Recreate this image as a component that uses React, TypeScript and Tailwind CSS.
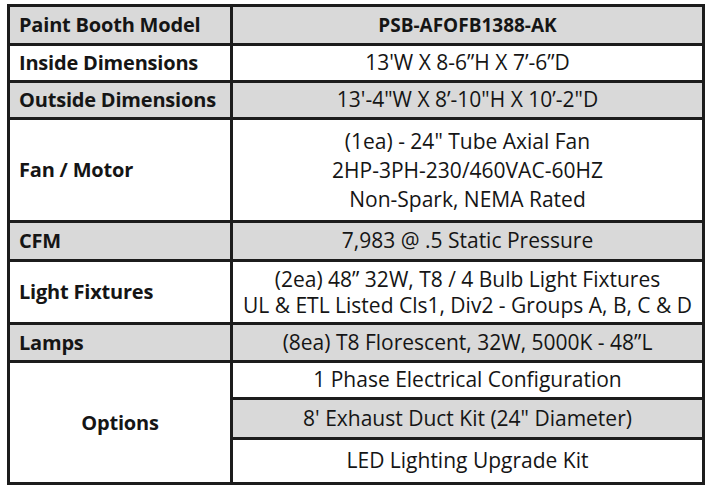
import React from "react";

const font = { fontFamily: "'Open Sans', Lato, sans-serif" };

export default function App() {
  const lab = "border-[3px] border-[#1c1c1c] pl-[9px] text-left font-bold text-[20px] text-[#151515] align-middle tracking-[-0.2px]";
  const val = "border-[3px] border-[#1c1c1c] text-center text-[21px] text-[#151515] align-middle";
  return (
    <div className="w-[710px] h-[487px] bg-white pl-[7px] pt-[4px]" style={font}>
      <table className="border-collapse w-[698px] table-fixed">
        <colgroup>
          <col className="w-[223px]" />
          <col />
        </colgroup>
        <tbody>
          <tr className="h-[39px] bg-[#d9d9d9]">
            <td className={lab}>Paint Booth Model</td>
            <td className="border-[3px] border-[#1c1c1c] text-center text-[19px] font-bold text-[#151515] align-middle">PSB-AFOFB1388-AK</td>
          </tr>
          <tr className="h-[37px] bg-white">
            <td className={lab}>Inside Dimensions</td>
            <td className={val}>13'W X 8-6”H X 7’-6”D</td>
          </tr>
          <tr className="h-[37px] bg-[#d9d9d9]">
            <td className={lab}>Outside Dimensions</td>
            <td className={val}>13'-4"W X 8’-10"H X 10’-2"D</td>
          </tr>
          <tr className="h-[103px] bg-white">
            <td className={lab}>Fan / Motor</td>
            <td className={val + " leading-[29px]"}>
              <div>(1ea) - 24" Tube Axial Fan</div>
              <div>2HP-3PH-230/460VAC-60HZ</div>
              <div>Non-Spark, NEMA Rated</div>
            </td>
          </tr>
          <tr className="h-[39px] bg-[#d9d9d9]">
            <td className={lab}>CFM</td>
            <td className={val}>7,983 @ .5 Static Pressure</td>
          </tr>
          <tr className="h-[63px] bg-white">
            <td className={lab}>Light Fixtures</td>
            <td className={val + " leading-[26px]"}>
              <div>(2ea) 48” 32W, T8 / 4 Bulb Light Fixtures</div>
              <div>UL &amp; ETL Listed Cls1, Div2 - Groups A, B, C &amp; D</div>
            </td>
          </tr>
          <tr className="h-[38px] bg-[#d9d9d9]">
            <td className={lab}>Lamps</td>
            <td className={val}>(8ea) T8 Florescent, 32W, 5000K - 48”L</td>
          </tr>
          <tr className="h-[37px] bg-white">
            <td className="border-[3px] border-[#1c1c1c] text-center font-bold text-[20px] text-[#151515] align-middle tracking-[-0.2px]" rowSpan={3}>
              Options
            </td>
            <td className={val}>1 Phase Electrical Configuration</td>
          </tr>
          <tr className="h-[40px] bg-[#d9d9d9]">
            <td className={val}>8' Exhaust Duct Kit (24" Diameter)</td>
          </tr>
          <tr className="h-[45px] bg-white">
            <td className={val}>LED Lighting Upgrade Kit</td>
          </tr>
        </tbody>
      </table>
    </div>
  );
}
